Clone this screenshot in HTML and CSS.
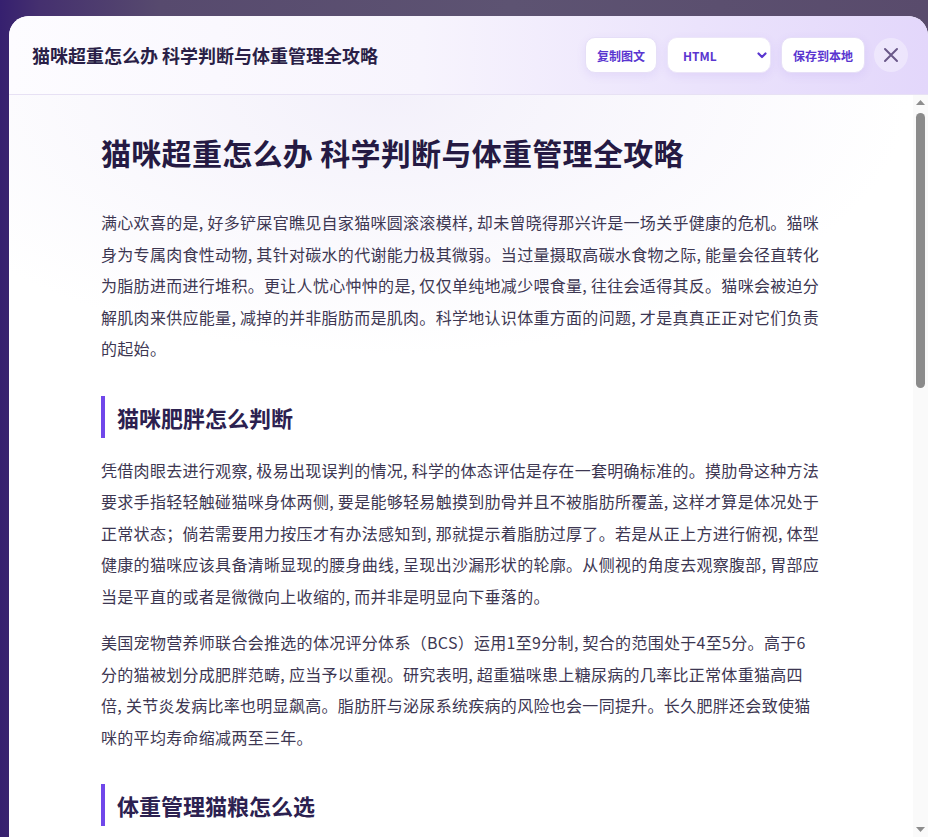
FILE: index.html
```html
<!DOCTYPE html>
<html lang="zh-CN">
<head>
<meta charset="utf-8">
<title>猫咪超重怎么办 科学判断与体重管理全攻略</title>
<link rel="stylesheet" href="styles.css">
</head>
<body>
<div class="modal">
  <header class="modal-header">
    <h2 class="modal-title">猫咪超重怎么办 科学判断与体重管理全攻略</h2>
    <div class="actions">
      <button class="btn">复制图文</button>
      <div class="select-wrap">
        <select class="select">
          <option>HTML</option>
          <option>Markdown</option>
        </select>
        <svg class="chevron" width="10" height="7" viewBox="0 0 10 7"><path d="M1.5 1.5 L5 5 L8.5 1.5" fill="none" stroke="#5a36d0" stroke-width="2.2" stroke-linecap="round" stroke-linejoin="round"/></svg>
      </div>
      <button class="btn">保存到本地</button>
      <button class="close" aria-label="关闭">
        <svg width="16" height="16" viewBox="0 0 16 16"><path d="M2 2 L14 14 M14 2 L2 14" fill="none" stroke="#6a5889" stroke-width="2" stroke-linecap="round"/></svg>
      </button>
    </div>
  </header>
  <div class="modal-body">
    <div class="scroll-content">
      <article class="article">
        <h1>猫咪超重怎么办 科学判断与体重管理全攻略</h1>
        <p>满心欢喜的是, 好多铲屎官瞧见自家猫咪圆滚滚模样, 却未曾晓得那兴许是一场关乎健康的危机。猫咪身为专属肉食性动物, 其针对碳水的代谢能力极其微弱。当过量摄取高碳水食物之际, 能量会径直转化为脂肪进而进行堆积。更让人忧心忡忡的是, 仅仅单纯地减少喂食量, 往往会适得其反。猫咪会被迫分解肌肉来供应能量, 减掉的并非脂肪而是肌肉。科学地认识体重方面的问题, 才是真真正正对它们负责的起始。</p>
        <h2>猫咪肥胖怎么判断</h2>
        <p>凭借肉眼去进行观察, 极易出现误判的情况, 科学的体态评估是存在一套明确标准的。摸肋骨这种方法要求手指轻轻触碰猫咪身体两侧, 要是能够轻易触摸到肋骨并且不被脂肪所覆盖, 这样才算是体况处于正常状态；倘若需要用力按压才有办法感知到, 那就提示着脂肪过厚了。若是从正上方进行俯视, 体型健康的猫咪应该具备清晰显现的腰身曲线, 呈现出沙漏形状的轮廓。从侧视的角度去观察腹部, 胃部应当是平直的或者是微微向上收缩的, 而并非是明显向下垂落的。</p>
        <p>美国宠物营养师联合会推选的体况评分体系（BCS）运用1至9分制, 契合的范围处于4至5分。高于6分的猫被划分成肥胖范畴, 应当予以重视。研究表明, 超重猫咪患上糖尿病的几率比正常体重猫高四倍, 关节炎发病比率也明显飙高。脂肪肝与泌尿系统疾病的风险也会一同提升。长久肥胖还会致使猫咪的平均寿命缩减两至三年。</p>
        <h2>体重管理猫粮怎么选</h2>
        <p>选择减重猫粮时, 首先需要关注蛋白质含量。优质的体重管理猫粮应当以动物性蛋白为主要来源, 粗蛋白含量最好不低于40%, 这样才能在控制热量的同时维持猫咪的肌肉量。其次要留意碳水化合物的比例, 谷物和淀粉类原料排名靠前的产品并不适合肥胖猫咪。</p>
        <p>膳食纤维同样是重要的考量指标。适量的纤维能够增加饱腹感, 减少猫咪频繁讨食的行为, 同时有助于肠道健康。左旋肉碱可以促进脂肪代谢, 在很多处方类减重粮中都有添加。选购时还应查看每百克的热量数值, 并根据猫咪的目标体重来计算每日喂食量。</p>
      </article>
    </div>
    <div class="scrollbar" aria-hidden="true">
      <div class="sb-btn">
        <svg width="9" height="5" viewBox="0 0 9 5"><polygon points="0,5 4.5,0 9,5" fill="#8d8d8d"/></svg>
      </div>
      <div class="sb-track">
        <div class="sb-thumb"></div>
      </div>
      <div class="sb-btn">
        <svg width="9" height="5" viewBox="0 0 9 5"><polygon points="0,0 9,0 4.5,5" fill="#8d8d8d"/></svg>
      </div>
    </div>
  </div>
</div>
</body>
</html>
```

FILE: styles.css
```css
html, body {
  margin: 0;
  padding: 0;
}

body {
  height: 837px;
  overflow: hidden;
  background: linear-gradient(90deg, #36206f 0px, #45306f 40px, #574a6e 160px, #5d5372 55%, #594b6c 100%);
  font-family: "Noto Sans CJK SC", "Noto Sans", sans-serif;
}

.modal {
  margin: 16px 0 0 9px;
  width: 919px;
  height: 821px;
  background: #fff;
  border-radius: 20px 20px 0 0;
  display: flex;
  flex-direction: column;
  overflow: hidden;
}

.modal-header {
  flex: 0 0 78px;
  display: flex;
  align-items: center;
  padding: 0 20px 0 23px;
  border-bottom: 1px solid #e7e1f4;
  background: linear-gradient(90deg, #fdfcff 0%, #f7f4fd 45%, #ebe3fc 75%, #e3d7fb 100%);
}

.modal-title {
  flex: 1;
  margin: 0;
  font-size: 18px;
  line-height: 26px;
  font-weight: 700;
  color: #2a1f47;
}

.actions {
  display: flex;
  align-items: center;
  gap: 10px;
}

.btn {
  height: 36px;
  padding: 0 11px;
  border: 1px solid #e6dff7;
  border-radius: 10px;
  background: #fff;
  color: #5a36d0;
  font-family: "Noto Sans CJK SC", "Noto Sans", sans-serif;
  font-size: 12px;
  font-weight: 700;
  box-shadow: 0 3px 10px rgba(124, 88, 230, 0.10);
  cursor: pointer;
}

.select-wrap {
  position: relative;
  width: 104px;
  height: 36px;
}

.select {
  appearance: none;
  -webkit-appearance: none;
  width: 100%;
  height: 100%;
  padding: 0 0 0 15px;
  border: 1px solid #ece6f8;
  border-radius: 10px;
  background: #fff;
  color: #5a36d0;
  font-family: "Noto Sans CJK SC", "Noto Sans", sans-serif;
  font-size: 12px;
  font-weight: 700;
  box-shadow: 0 3px 10px rgba(124, 88, 230, 0.10);
  outline: none;
}

.chevron {
  position: absolute;
  right: 4px;
  top: 15px;
  pointer-events: none;
}

.close {
  margin-left: -1px;
  width: 34px;
  height: 34px;
  border: none;
  border-radius: 50%;
  background: rgba(255, 255, 255, 0.35);
  display: flex;
  align-items: center;
  justify-content: center;
  padding: 0;
  cursor: pointer;
}

.modal-body {
  flex: 1;
  min-height: 0;
  display: flex;
}

.scroll-content {
  flex: 1;
  min-width: 0;
  overflow: hidden;
  background: radial-gradient(520px 260px at 42% 0px, rgba(242, 239, 250, 0.9), rgba(255, 255, 255, 0) 100%), #fff;
}

.scrollbar {
  flex: 0 0 15px;
  display: flex;
  flex-direction: column;
  background: #fafafa;
}

.sb-btn {
  flex: 0 0 15px;
  display: flex;
  align-items: center;
  justify-content: center;
}

.sb-track {
  flex: 1;
  padding-top: 3px;
  display: flex;
  justify-content: center;
}

.sb-thumb {
  width: 9px;
  height: 275px;
  border-radius: 5px;
  background: #8b8b8b;
}

.article {
  max-width: 720px;
  margin: 0 auto;
  padding: 38px 0 80px;
}

.article h1 {
  margin: 0 0 35px;
  font-size: 30px;
  line-height: 39px;
  font-weight: 700;
  letter-spacing: 0.3px;
  color: #251a43;
}

.article p {
  margin: 0 0 15px;
  font-size: 16px;
  line-height: 31.5px;
  letter-spacing: 0.3px;
  color: #3d3752;
}

.article h2 {
  margin: 31px 0 17px;
  padding: 5px 0 5px 12px;
  border-left: 4px solid #7047ea;
  font-size: 22px;
  line-height: 32px;
  font-weight: 700;
  color: #2c2150;
}
```
